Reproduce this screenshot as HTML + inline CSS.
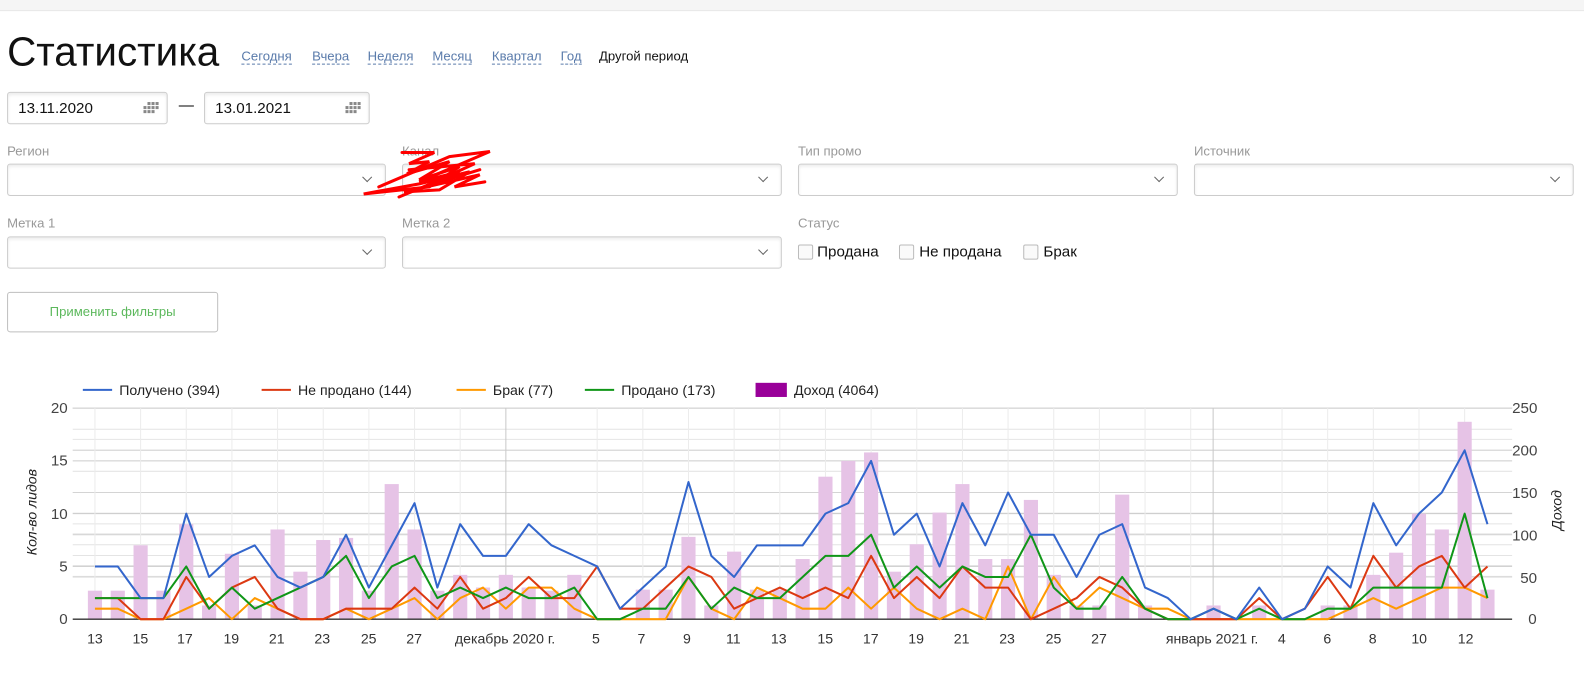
<!DOCTYPE html>
<html><head><meta charset="utf-8">
<style>
*{box-sizing:border-box}
html,body{margin:0;overflow:hidden}
body{background:#fff;font-family:"Liberation Sans",Arial,sans-serif;width:1600px;height:677px;position:relative}
#w{position:absolute;left:0;top:0;width:1584px;height:670px;transform:scale(1.0101);transform-origin:0 0}
.abs{position:absolute}
.top{left:0;top:0;width:1584px;height:11px;background:#f5f5f5;border-bottom:1px solid #e8e8e8}
h1{position:absolute;left:7px;top:30px;margin:0;font-weight:normal;font-size:40px;color:#111}
.lnk{position:absolute;top:48px;font-size:13px;color:#5a7bab;border-bottom:1px dashed #5a7bab;line-height:15px}
.inp{position:absolute;height:32px;border:1px solid #ccc;border-radius:3px;box-shadow:inset 0 2px 3px rgba(0,0,0,.08);background:#fff;overflow:hidden}
.date{font-size:15px;color:#111;padding:7px 0 0 10px}
.lbl{position:absolute;font-size:13px;color:#999}
.chev{position:absolute;right:14px;top:9px;width:7px;height:7px;border-right:1.5px solid #666;border-bottom:1.5px solid #666;transform:rotate(45deg)}
.cb{position:absolute;top:242px;width:15px;height:15px;border:1px solid #bbb;border-radius:2px;background:#fafafa}
.cbt{position:absolute;top:241px;font-size:15px;color:#111}
.btn{position:absolute;left:7px;top:289px;width:209px;height:40px;border:1px solid #bfbfbf;border-radius:3px;color:#5cb85c;font-size:13px;text-align:center;line-height:38px}
</style></head><body><div id="w">
<div class="abs top"></div>
<h1>Статистика</h1>
<span class="lnk" style="left:239px">Сегодня</span>
<span class="lnk" style="left:309px">Вчера</span>
<span class="lnk" style="left:364px">Неделя</span>
<span class="lnk" style="left:428px">Месяц</span>
<span class="lnk" style="left:487px">Квартал</span>
<span class="lnk" style="left:555px">Год</span>
<span class="abs" style="left:593px;top:48px;font-size:13px;color:#111;line-height:15px">Другой период</span>

<div class="inp date" style="left:7px;top:91px;width:159px">13.11.2020
<svg class="abs" style="right:5px;top:9px" width="18" height="13"><g fill="#888"><rect x="4" y="0" width="3" height="3"/><rect x="8" y="0" width="3" height="3"/><rect x="12" y="0" width="3" height="3"/><rect x="0" y="4" width="3" height="3"/><rect x="4" y="4" width="3" height="3"/><rect x="8" y="4" width="3" height="3"/><rect x="12" y="4" width="3" height="3"/><rect x="0" y="8" width="3" height="3"/><rect x="4" y="8" width="3" height="3"/><rect x="8" y="8" width="3" height="3"/></g></svg></div>
<span class="abs" style="left:177px;top:96px;font-size:15px">—</span>
<div class="inp date" style="left:202px;top:91px;width:164px">13.01.2021
<svg class="abs" style="right:5px;top:9px" width="18" height="13"><g fill="#888"><rect x="4" y="0" width="3" height="3"/><rect x="8" y="0" width="3" height="3"/><rect x="12" y="0" width="3" height="3"/><rect x="0" y="4" width="3" height="3"/><rect x="4" y="4" width="3" height="3"/><rect x="8" y="4" width="3" height="3"/><rect x="12" y="4" width="3" height="3"/><rect x="0" y="8" width="3" height="3"/><rect x="4" y="8" width="3" height="3"/><rect x="8" y="8" width="3" height="3"/></g></svg></div>

<span class="lbl" style="left:7px;top:142px">Регион</span>
<span class="lbl" style="left:398px;top:142px">Канал</span>
<span class="lbl" style="left:790px;top:142px">Тип промо</span>
<span class="lbl" style="left:1182px;top:142px">Источник</span>
<div class="inp" style="left:7px;top:162px;width:375px"><div class="chev"></div></div>
<div class="inp" style="left:398px;top:162px;width:376px"><div class="chev"></div></div>
<div class="inp" style="left:790px;top:162px;width:376px"><div class="chev"></div></div>
<div class="inp" style="left:1182px;top:162px;width:376px"><div class="chev"></div></div>

<span class="lbl" style="left:7px;top:213px">Метка 1</span>
<span class="lbl" style="left:398px;top:213px">Метка 2</span>
<span class="lbl" style="left:790px;top:213px">Статус</span>
<div class="inp" style="left:7px;top:234px;width:375px"><div class="chev"></div></div>
<div class="inp" style="left:398px;top:234px;width:376px"><div class="chev"></div></div>
<div class="cb" style="left:790px"></div><span class="cbt" style="left:809px">Продана</span>
<div class="cb" style="left:890px"></div><span class="cbt" style="left:910px">Не продана</span>
<div class="cb" style="left:1013px"></div><span class="cbt" style="left:1033px">Брак</span>

<svg class="abs" style="left:355px;top:140px" width="140" height="60"><g fill="none" stroke="#f00" stroke-width="3" stroke-linecap="round">
<path d="M43 11 L75 11 L50 22 L70 20 L48 32 L90 20 L60 38 L100 25 L70 45 L5 52 L60 42 L110 30 L80 48 L45 50 L120 33 L95 45 L125 40"/>
<path d="M20 45 L90 15 L130 10 L60 40 L100 30 L40 55"/>
<path d="M50 28 L115 22 L65 45 L120 28"/></g></svg>

<div class="btn">Применить фильтры</div>

<svg class="abs" style="left:0;top:365px" width="1584" height="305" id="ch" font-family="Liberation Sans, Arial, sans-serif">
<g id="grid"></g>
<g id="bars"></g>
<g id="lines"></g>
<g font-size="14" fill="#222" transform="translate(0,5)">
<line x1="82" y1="16" x2="111" y2="16" stroke="#3366cc" stroke-width="2"/><text x="118" y="21">Получено (394)</text>
<line x1="259" y1="16" x2="288" y2="16" stroke="#dc3912" stroke-width="2"/><text x="295" y="21">Не продано (144)</text>
<line x1="452" y1="16" x2="481" y2="16" stroke="#ff9900" stroke-width="2"/><text x="488" y="21">Брак (77)</text>
<line x1="579" y1="16" x2="608" y2="16" stroke="#109618" stroke-width="2"/><text x="615" y="21">Продано (173)</text>
<rect x="748" y="9" width="31" height="14" fill="#990099"/><text x="786" y="21">Доход (4064)</text>
</g>
<g font-size="15" fill="#444" text-anchor="end">
<text x="67" y="44">20</text><text x="67" y="96">15</text><text x="67" y="149">10</text><text x="67" y="201">5</text><text x="67" y="253">0</text>
</g>
<g font-size="15" fill="#444">
<text x="1497" y="44">250</text><text x="1497" y="86">200</text><text x="1497" y="128">150</text><text x="1497" y="170">100</text><text x="1505" y="212">50</text><text x="1513" y="253">0</text>
</g>
<text transform="translate(36,142) rotate(-90)" text-anchor="middle" font-size="14" font-style="italic" fill="#222">Кол-во лидов</text>
<text transform="translate(1546,140) rotate(-90)" text-anchor="middle" font-size="14" font-style="italic" fill="#222">Доход</text>
<g font-size="14" fill="#333" text-anchor="middle" transform="translate(0,5)">
<text x="94" y="267">13</text><text x="139" y="267">15</text><text x="183" y="267">17</text><text x="229" y="267">19</text><text x="274" y="267">21</text><text x="319" y="267">23</text><text x="365" y="267">25</text><text x="410" y="267">27</text>
<text x="500" y="267">декабрь 2020 г.</text>
<text x="590" y="267">5</text><text x="635" y="267">7</text><text x="680" y="267">9</text><text x="726" y="267">11</text><text x="771" y="267">13</text><text x="817" y="267">15</text><text x="862" y="267">17</text><text x="907" y="267">19</text><text x="952" y="267">21</text><text x="997" y="267">23</text><text x="1043" y="267">25</text><text x="1088" y="267">27</text>
<text x="1200" y="267">январь 2021 г.</text>
<text x="1269" y="267">4</text><text x="1314" y="267">6</text><text x="1359" y="267">8</text><text x="1405" y="267">10</text><text x="1451" y="267">12</text>
</g>
</svg>
</div>
<script>
(function(){
var NS="http://www.w3.org/2000/svg";
function el(p,t,a){var e=document.createElementNS(NS,t);for(var k in a)e.setAttribute(k,a[k]);p.appendChild(e);return e;}
var X0=94,DX=22.6,Y0=248,U=10.45,L=72,R=1497;
function x(i){return X0+DX*i}
var g=document.getElementById('grid');
[30.7,51.7,61.7,72.3,93.3,114.3,134.7,145.3,155.3,166,176.7,186.7,197.3].forEach(function(v){
 var yy=v+8.3; el(g,'line',{x1:L,x2:R,y1:yy,y2:yy,stroke:'#e4e4e4','stroke-width':1});});
[39,39+52.25,39+104.5,39+156.75].forEach(function(yy){el(g,'line',{x1:L,x2:R,y1:yy,y2:yy,stroke:'#ccc'});});
[39,39+41.8,39+83.6,39+125.4,39+167.2].forEach(function(yy){el(g,'line',{x1:L,x2:R,y1:yy,y2:yy,stroke:'#d4d4d4'});});
for(var i=0;i<18;i+=2){el(g,'line',{x1:x(i),x2:x(i),y1:39,y2:Y0,stroke:'#ececec'});}
for(var i=22;i<49;i+=2){el(g,'line',{x1:x(i),x2:x(i),y1:39,y2:Y0,stroke:'#ececec'});}
for(var i=52;i<62;i+=2){el(g,'line',{x1:x(i),x2:x(i),y1:39,y2:Y0,stroke:'#ececec'});}
el(g,'line',{x1:x(18),x2:x(18),y1:39,y2:Y0,stroke:'#c8c8c8'});
el(g,'line',{x1:1201,x2:1201,y1:39,y2:Y0,stroke:'#c8c8c8'});
var bars=[2.7,2.7,7,2.7,9,1.3,6.2,1.3,8.5,4.5,7.5,7.7,2.7,12.8,8.5,2.7,4.2,3,4.2,3,2.7,4.2,0,0,2.8,2.8,7.8,1.3,6.4,2.8,2.8,5.7,13.5,15,15.8,4.5,7.1,10.1,12.8,5.7,5.7,11.3,4.2,1.3,1.3,11.8,1.3,0,0,1.3,0,1.3,0,0,1.3,1.3,4.2,6.3,10,8.5,18.7,2.8];
var bg=document.getElementById('bars');
bars.forEach(function(v,i){if(v>0)el(bg,'rect',{x:x(i)-7,y:Y0-v*U,width:14,height:v*U,fill:'#e6c3e6'});});
el(bg,'line',{x1:L,x2:R,y1:Y0,y2:Y0,stroke:'#333','stroke-width':1.3});
var S={
'#109618':[2,2,2,2,5,1,3,1,2,3,4,6,2,5,6,2,3,2,3,2,2,3,0,0,1,1,4,1,3,2,2,4,6,6,8,3,5,3,5,4,4,8,3,1,1,4,1,0,0,1,0,1,0,0,1,1,3,3,3,3,10,2],
'#ff9900':[1,1,0,0,1,2,0,2,1,0,0,1,0,1,2,0,2,3,1,3,3,1,0,0,0,0,4,1,0,3,2,1,1,3,1,3,1,0,1,0,5,0,4,1,3,2,1,1,0,0,0,0,0,0,0,1,2,1,2,3,3,2],
'#dc3912':[2,2,0,0,4,1,3,4,1,0,0,1,1,1,3,1,4,1,2,4,2,2,5,1,1,3,5,4,1,2,3,2,3,2,6,2,4,2,5,3,3,0,1,2,4,3,1,0,0,0,0,2,0,1,4,1,6,3,5,6,3,5],
'#3366cc':[5,5,2,2,10,4,6,7,4,3,4,8,3,7,11,3,9,6,6,9,7,6,5,1,3,5,13,6,4,7,7,7,10,11,15,8,10,5,11,7,12,8,8,4,8,9,3,2,0,1,0,3,0,1,5,3,11,7,10,12,16,9]
};
var lg=document.getElementById('lines');
['#ff9900','#dc3912','#109618','#3366cc'].forEach(function(c){
 var d=S[c].map(function(v,i){return (i?'L':'M')+x(i).toFixed(1)+' '+(Y0-v*U).toFixed(1)}).join(' ');
 el(lg,'path',{d:d,fill:'none',stroke:c,'stroke-width':2,'stroke-linejoin':'round'});
});
})();
</script>
</body></html>
